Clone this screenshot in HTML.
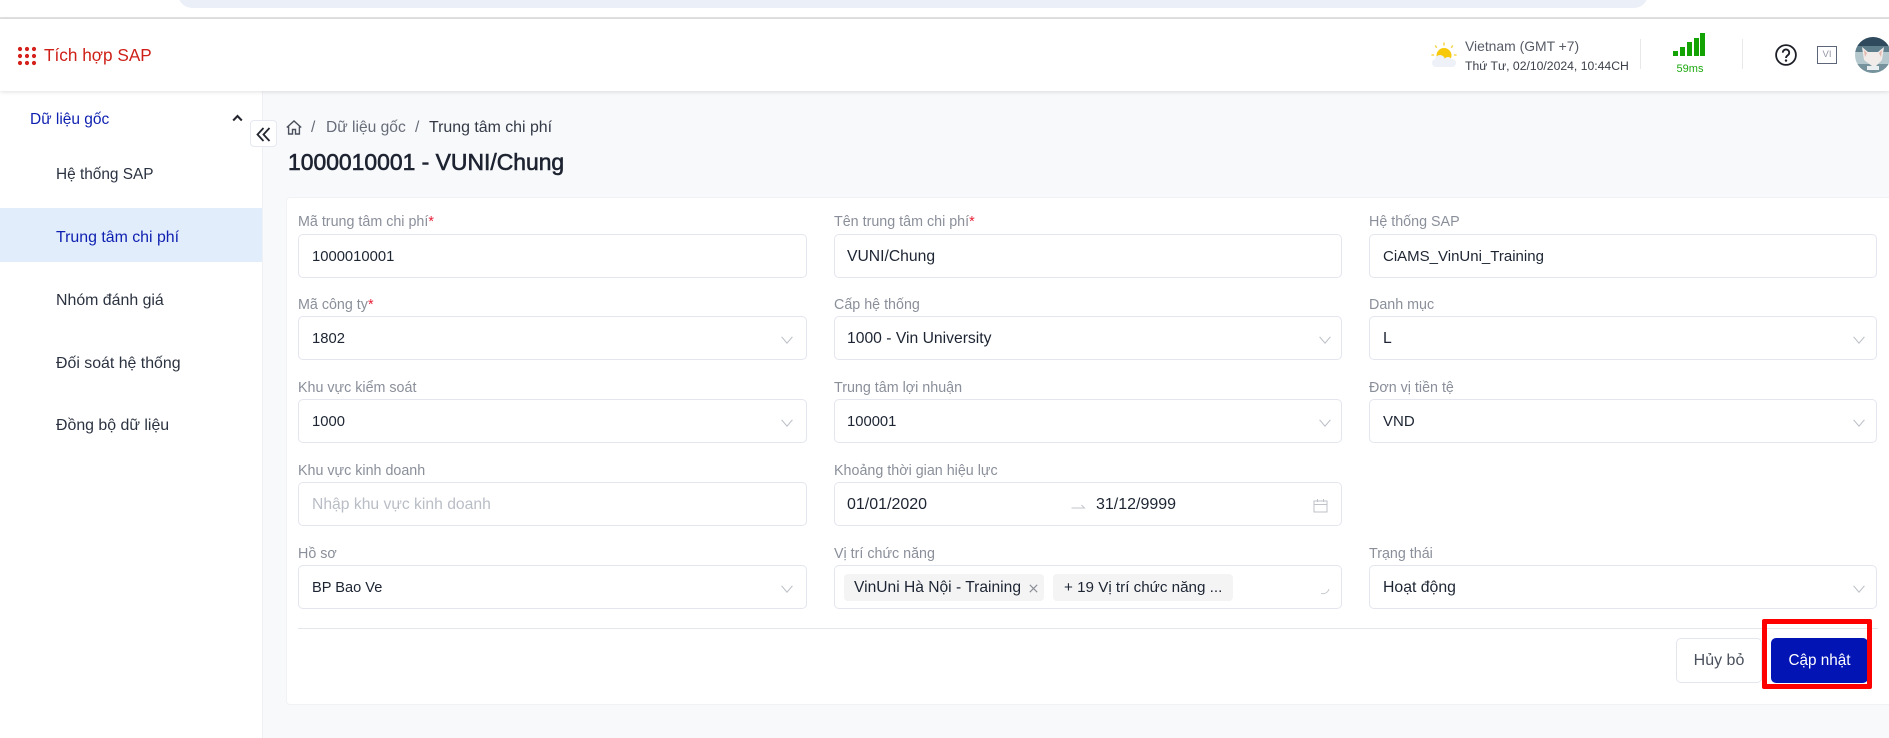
<!DOCTYPE html>
<html lang="vi">
<head>
<meta charset="utf-8">
<title>Tích hợp SAP</title>
<style>
*{box-sizing:border-box}
html,body{margin:0;padding:0;width:1889px;height:738px;overflow:hidden;background:#f8f9fb;font-family:"Liberation Sans","DejaVu Sans",sans-serif;color:#1f2430}
.a{position:absolute;white-space:nowrap}
.t{position:absolute;white-space:nowrap;line-height:20px;height:20px}
.lab{position:absolute;white-space:nowrap;font-size:14.3px;line-height:18px;color:#8a8f9a}
.lab b{color:#e8233a;font-weight:400}
.f{position:absolute;height:44px;background:#fff;border:1px solid #e3e6ef;border-radius:5px}
.v{position:absolute;white-space:nowrap;font-size:15.7px;line-height:20px;color:#1d2533}
.n{font-size:14.8px}
.c1{left:298px;width:509px}.c2{left:834px;width:508px}.c3{left:1369px;width:508px}
.side{font-size:15.9px;color:#2b3240;left:56px}
svg{position:absolute;overflow:visible}
</style>
</head>
<body>
<div class="a" style="left:0;top:0;width:1889px;height:17px;background:#fff"></div>
<div class="a" style="left:178px;top:-10px;width:1470px;height:18px;background:#ebeff8;border-radius:0 0 14px 14px"></div>
<div class="a" style="left:0;top:17px;width:1889px;height:2px;background:#e2e2e2"></div>

<!-- header -->
<div class="a" style="left:0;top:19px;width:1889px;height:72px;background:#fff;box-shadow:0 1px 4px rgba(0,0,0,.12);z-index:3">
</div>
<div style="position:absolute;left:0;top:0;width:1889px;height:100px;z-index:4">
<svg style="left:18px;top:47px" width="18" height="18" viewBox="0 0 18 18" fill="#d4211b">
<circle cx="2" cy="2" r="2.1"/><circle cx="9" cy="2" r="2.1"/><circle cx="16" cy="2" r="2.1"/>
<circle cx="2" cy="9" r="2.1"/><circle cx="9" cy="9" r="2.1"/><circle cx="16" cy="9" r="2.1"/>
<circle cx="2" cy="16" r="2.1"/><circle cx="9" cy="16" r="2.1"/><circle cx="16" cy="16" r="2.1"/>
</svg>
<div class="t" style="left:44px;top:45px;font-size:17.2px;color:#cf2018">Tích hợp SAP</div>

<svg style="left:1430px;top:41px" width="30" height="28" viewBox="0 0 30 28">
<circle cx="14" cy="14.5" r="7.500" fill="#f7c90a"/>
<g stroke="#f7d64a" stroke-width="1.500" stroke-linecap="round"><path d="M14 2v2M5.500 5l1 1.300M22.500 5l-1 1.300M2 14h1.500M24.500 14h1.500"/></g>
<g fill="#eef1f7"><rect x="2" y="18" width="24" height="8" rx="4"/><circle cx="10" cy="19" r="5"/><circle cx="18" cy="20" r="4"/></g>
</svg>
<div class="t" style="left:1465px;top:36px;font-size:13.9px;color:#565b66">Vietnam (GMT +7)</div>
<div class="t" style="left:1465px;top:56px;font-size:12.2px;color:#3b404a">Thứ Tư, 02/10/2024, 10:44CH</div>
<div class="a" style="left:1640px;top:39px;width:1px;height:30px;background:#e8e8e8"></div>
<div class="a" style="left:1673px;top:51px;width:5px;height:5px;background:#14a304"></div>
<div class="a" style="left:1680px;top:47px;width:5px;height:9px;background:#14a304"></div>
<div class="a" style="left:1687px;top:42px;width:5px;height:14px;background:#14a304"></div>
<div class="a" style="left:1694px;top:38px;width:5px;height:18px;background:#14a304"></div>
<div class="a" style="left:1700px;top:33px;width:5px;height:23px;background:#14a304"></div>
<div class="t" style="left:1670px;top:59px;width:40px;text-align:center;font-size:11px;color:#1eaa10">59ms</div>
<div class="a" style="left:1742px;top:39px;width:1px;height:30px;background:#e8e8e8"></div>
<svg style="left:1775px;top:44px" width="22" height="22" viewBox="0 0 22 22">
<circle cx="11" cy="11" r="9.900" fill="none" stroke="#1c1f27" stroke-width="1.800"/>
<path d="M7.800 8.700a3.200 3.200 0 1 1 5 2.600c-1.200.8-1.800 1.300-1.800 2.700" fill="none" stroke="#1c1f27" stroke-width="1.800"/>
<circle cx="11" cy="16.600" r="1.200" fill="#1c1f27"/>
</svg>
<div class="a" style="left:1817px;top:46px;width:20px;height:18px;border:1px solid #5d6679;font-size:9.500px;line-height:16px;text-align:center;color:#9197a3">VI</div>
<svg style="left:1855px;top:37px" width="34" height="36" viewBox="0 0 34 36">
<defs><clipPath id="av"><circle cx="18" cy="18" r="18"/></clipPath></defs>
<g clip-path="url(#av)">
<rect width="36" height="36" fill="#b4c8cd"/>
<rect width="36" height="9" fill="#2f4a5c"/>
<rect y="9" width="36" height="6" fill="#5f7f8d"/>
<rect y="27" width="36" height="9" fill="#76939d"/>
<path d="M7 10l6 5h10l6-5-2 13-6 6h-4l-8-6z" fill="#f1ecea"/>
<path d="M9 13l3 3-2 4zM27 13l-3 3 2 4z" fill="#e2b7ab"/>
<path d="M12 29h12v4H12z" fill="#e9eef0"/>
</g>
</svg>
</div>

<!-- sidebar -->
<div class="a" style="left:0;top:91px;width:263px;height:647px;background:#fff;border-right:1px solid #eef0f4"></div>
<div class="t" style="left:30px;top:110px;font-size:15.5px;color:#0d1fb0">Dữ liệu gốc</div>
<svg style="left:232px;top:114px" width="11" height="8" viewBox="0 0 11 8"><path d="M1.200 6.500L5.500 2l4.300 4.500" fill="none" stroke="#23262e" stroke-width="2"/></svg>
<div class="t side" style="top:165px;font-size:15.4px">Hệ thống SAP</div>
<div class="a" style="left:0;top:208px;width:262px;height:54px;background:#e2edfb"></div>
<div class="t side" style="top:228px;color:#0d1fb0">Trung tâm chi phí</div>
<div class="t side" style="top:291px">Nhóm đánh giá</div>
<div class="t side" style="top:354px">Đối soát hệ thống</div>
<div class="t side" style="top:416px">Đồng bộ dữ liệu</div>
<div class="a" style="left:250px;top:120px;width:27px;height:27px;background:#fff;border:1px solid #e6e9f0;border-radius:4px"></div>
<svg style="left:256px;top:127px" width="15" height="15" viewBox="0 0 15 15"><path d="M7.500 1L1.500 7.500l6 6.500M13.500 1l-6 6.500 6 6.500" fill="none" stroke="#23272f" stroke-width="1.800"/></svg>

<!-- breadcrumb -->
<svg style="left:286px;top:120px" width="16" height="15" viewBox="0 0 16 15"><path d="M.8 7.500L8 1l7.200 6.500M2.600 6.500V14h3.900V9.500h3V14h3.900V6.500" fill="none" stroke="#4a505c" stroke-width="1.400"/></svg>
<div class="t" style="left:311px;top:118px;font-size:15.6px;color:#666c78">/</div>
<div class="t" style="left:326px;top:118px;font-size:15.6px;color:#666c78">Dữ liệu gốc</div>
<div class="t" style="left:415px;top:118px;font-size:15.6px;color:#666c78">/</div>
<div class="t" style="left:429px;top:118px;font-size:15.9px;color:#333945">Trung tâm chi phí</div>
<div class="a" style="left:288px;top:149px;font-size:22.900px;line-height:26px;font-weight:400;-webkit-text-stroke:.6px #1d2330;color:#1d2330">1000010001 - VUNI/Chung</div>

<!-- card -->
<div class="a" style="left:286px;top:197px;width:1620px;height:508px;background:#fff;border:1px solid #f0f2f6;border-radius:4px"></div>

<!-- row 1 -->
<div class="lab c1" style="top:213px">Mã trung tâm chi phí<b>*</b></div>
<div class="lab c2" style="top:213px">Tên trung tâm chi phí<b>*</b></div>
<div class="lab c3" style="top:213px">Hệ thống SAP</div>
<div class="f c1" style="top:234px"></div><div class="f c2" style="top:234px"></div><div class="f c3" style="top:234px"></div>
<div class="v n" style="left:312px;top:247px">1000010001</div>
<div class="v" style="left:847px;top:247px">VUNI/Chung</div>
<div class="v" style="left:1383px;top:247px;font-size:15px">CiAMS_VinUni_Training</div>

<!-- row 2 -->
<div class="lab c1" style="top:296px">Mã công ty<b>*</b></div>
<div class="lab c2" style="top:296px">Cấp hệ thống</div>
<div class="lab c3" style="top:296px">Danh mục</div>
<div class="f c1" style="top:316px"></div><div class="f c2" style="top:316px"></div><div class="f c3" style="top:316px"></div>
<div class="v n" style="left:312px;top:329px">1802</div>
<div class="v" style="left:847px;top:329px">1000 - Vin University</div>
<div class="v" style="left:1383px;top:329px">L</div>

<!-- row 3 -->
<div class="lab c1" style="top:379px">Khu vực kiểm soát</div>
<div class="lab c2" style="top:379px">Trung tâm lợi nhuận</div>
<div class="lab c3" style="top:379px">Đơn vị tiền tệ</div>
<div class="f c1" style="top:399px"></div><div class="f c2" style="top:399px"></div><div class="f c3" style="top:399px"></div>
<div class="v n" style="left:312px;top:412px">1000</div>
<div class="v n" style="left:847px;top:412px">100001</div>
<div class="v" style="left:1383px;top:412px;font-size:15px">VND</div>

<!-- row 4 -->
<div class="lab c1" style="top:462px">Khu vực kinh doanh</div>
<div class="lab c2" style="top:462px">Khoảng thời gian hiệu lực</div>
<div class="f c1" style="top:482px"></div><div class="f c2" style="top:482px"></div>
<div class="v" style="left:312px;top:495px;color:#b9bdc6">Nhập khu vực kinh doanh</div>
<div class="v" style="left:847px;top:495px;font-size:16px">01/01/2020</div>
<div class="v" style="left:1096px;top:495px;font-size:16px">31/12/9999</div>
<svg style="left:1071px;top:503px" width="15" height="6" viewBox="0 0 15 6"><path d="M.5 5h13l-3-3" fill="none" stroke="#c3c6cd" stroke-width="1"/></svg>
<svg style="left:1313px;top:498px" width="15" height="15" viewBox="0 0 15 15"><path d="M1 3h13v11H1zM1 6.500h13M4.500 1v3M10.500 1v3" fill="none" stroke="#bfc2c9" stroke-width="1"/></svg>

<!-- row 5 -->
<div class="lab c1" style="top:545px">Hồ sơ</div>
<div class="lab c2" style="top:545px">Vị trí chức năng</div>
<div class="lab c3" style="top:545px">Trạng thái</div>
<div class="f c1" style="top:565px"></div><div class="f c2" style="top:565px"></div><div class="f c3" style="top:565px"></div>
<div class="v" style="left:312px;top:578px;font-size:14.6px">BP Bao Ve</div>
<div class="a" style="left:844px;top:574px;width:200px;height:27px;background:#f4f4f5;border-radius:4px"></div>
<div class="a" style="left:1053px;top:574px;width:180px;height:27px;background:#f4f4f5;border-radius:4px"></div>
<div class="v" style="left:854px;top:578px;font-size:15.6px">VinUni Hà Nội - Training</div>
<svg style="left:1029px;top:584px" width="9" height="9" viewBox="0 0 9 9"><path d="M.8.800l7.400 7.400M8.200.800L.8 8.200" stroke="#8a8d94" stroke-width="1.100" fill="none"/></svg>
<div class="v" style="left:1064px;top:578px;font-size:15.2px">+ 19 Vị trí chức năng ...</div>
<svg style="left:1320px;top:587px" width="10" height="8" viewBox="0 0 10 8"><path d="M1 6.500c3.500.6 6.800-.6 8-4.500" stroke="#c9ccd2" stroke-width="1.100" fill="none"/></svg>
<div class="v" style="left:1383px;top:578px;font-size:15.8px">Hoạt động</div>

<!-- chevrons -->
<svg width="0" height="0" style="left:0;top:0"><defs><path id="ch" d="M.6.800L6 7.200 11.400.800" fill="none" stroke="#bcc0c7" stroke-width="1.100"/></defs></svg>
<svg style="left:781px;top:336px" width="12" height="8"><use href="#ch"/></svg>
<svg style="left:1319px;top:336px" width="12" height="8"><use href="#ch"/></svg>
<svg style="left:1853px;top:336px" width="12" height="8"><use href="#ch"/></svg>
<svg style="left:781px;top:419px" width="12" height="8"><use href="#ch"/></svg>
<svg style="left:1319px;top:419px" width="12" height="8"><use href="#ch"/></svg>
<svg style="left:1853px;top:419px" width="12" height="8"><use href="#ch"/></svg>
<svg style="left:781px;top:585px" width="12" height="8"><use href="#ch"/></svg>
<svg style="left:1853px;top:585px" width="12" height="8"><use href="#ch"/></svg>

<!-- footer -->
<div class="a" style="left:298px;top:628px;width:1580px;height:1px;background:#e3e6ed"></div>
<div class="a" style="left:1676px;top:638px;width:86px;height:45px;background:#fff;border:1px solid #e3e6ed;border-radius:5px;text-align:center;font-size:16px;line-height:43px;color:#4a505c">Hủy bỏ</div>
<div class="a" style="left:1771px;top:638px;width:97px;height:45px;background:#0214b4;border-radius:5px;text-align:center;font-size:15.3px;line-height:45px;color:#fff">Cập nhật</div>
<div class="a" style="left:1762px;top:619px;width:110px;height:70px;border:5px solid #ff0000;border-radius:2px"></div>
</body>
</html>
